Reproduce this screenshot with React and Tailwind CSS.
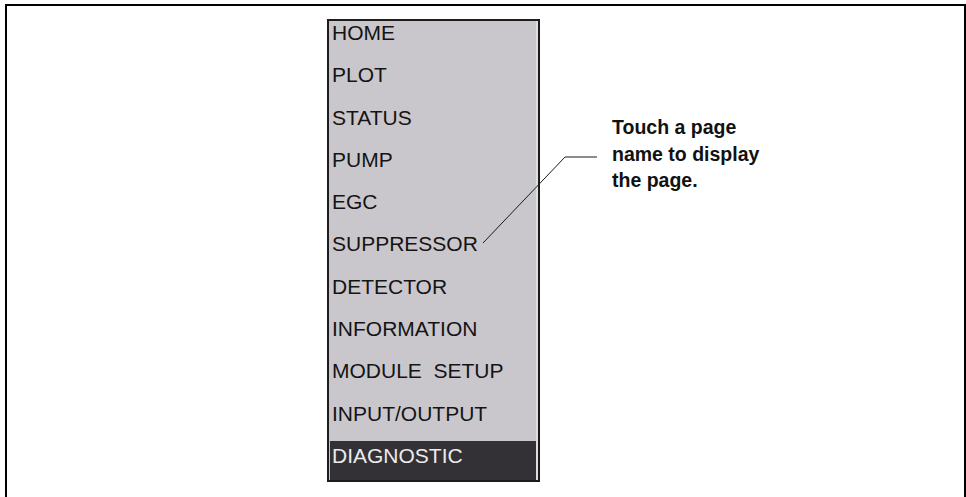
const pages = [
  'HOME',
  'PLOT',
  'STATUS',
  'PUMP',
  'EGC',
  'SUPPRESSOR',
  'DETECTOR',
  'INFORMATION',
  'MODULE  SETUP',
  'INPUT/OUTPUT',
]

function PageMenu() {
  return (
    <div className="w-[213px] h-[463px] border-2 border-[#1c1b1e] bg-[#c9c7cc] flex flex-col pl-[1px] shrink-0">
      <div className="flex-1 flex flex-col border-r-2 border-[#dedde0]">
        {pages.map((name, i) => (
          <div
            key={name}
            className={
              i === pages.length - 1
                ? 'h-[39.3px] pl-[2px] pt-[1px] text-[21px] leading-[21px] text-[#141414] whitespace-pre'
                : 'h-[42.3px] pl-[2px] pt-[1px] text-[21px] leading-[21px] text-[#141414] whitespace-pre'
            }
          >
            {name}
          </div>
        ))}
        <div className="flex-1 bg-[#333136] pl-[2px] pt-[4px] text-[21px] leading-[21px] text-[#ececec]">
          DIAGNOSTIC
        </div>
      </div>
    </div>
  )
}

export default function App() {
  return (
    <div
      className="relative w-[966px] h-[497px] bg-white overflow-hidden"
      style={{ fontFamily: '"Liberation Sans", Arial, sans-serif' }}
    >
      <div className="ml-[5px] mt-[4px] w-[961px] h-[493px] border-l-2 border-t-2 border-r-2 border-black flex items-start">
        <div className="ml-[320px] mt-[13px]">
          <PageMenu />
        </div>
        <div className="ml-[72px] mt-[108px] text-[19.5px] leading-[26.5px] font-bold text-[#111]">
          Touch a page
          <br />
          name to display
          <br />
          the page.
        </div>
      </div>

      <svg className="absolute left-0 top-0 pointer-events-none" width="966" height="497">
        <polyline points="483,243 565,157 597,157" fill="none" stroke="#1a1a1a" strokeWidth="1" />
      </svg>
    </div>
  )
}
